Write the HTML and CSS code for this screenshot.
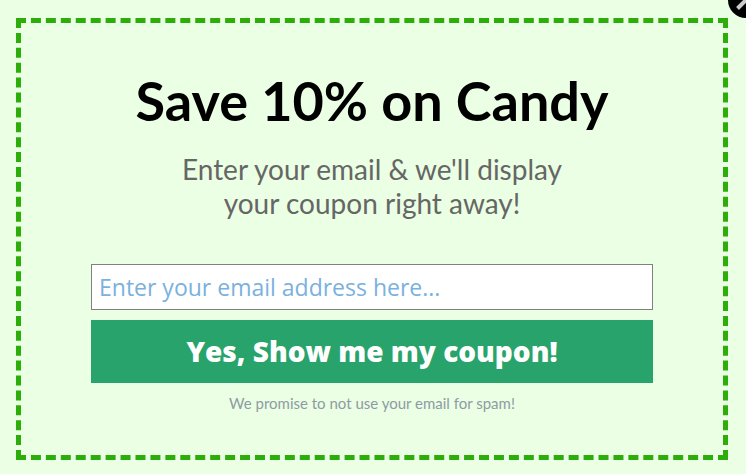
FILE: index.html
```html
<!DOCTYPE html>
<html lang="en">
<head>
    <meta charset="UTF-8">
    <meta name="viewport" content="width=device-width, initial-scale=1.0">
    <title>Save 10% on Candy</title>
    <link rel="stylesheet" href="styles.css">
</head>
<body>
    <div class="popup">
        <h1>Save 10% on Candy</h1>
        <p class="lead">Enter your email &amp; we'll display<br>your coupon right away!</p>
        <form class="form">
            <input class="email" type="email" placeholder="Enter your email address here..." aria-label="Email address">
            <button class="submit" type="submit">Yes, Show me my coupon!</button>
        </form>
        <p class="note">We promise to not use your email for spam!</p>
    </div>

    <button class="close" type="button" aria-label="Close">
        <svg viewBox="0 0 36 36" width="36" height="36">
            <circle cx="18" cy="18" r="18" fill="#000"/>
            <path d="M9.5 9.5L26.5 26.5M26.5 9.5L9.5 26.5" stroke="#ccc" stroke-width="4"/>
        </svg>
    </button>
</body>
</html>
```
FILE: styles.css
```css
* {
    box-sizing: border-box;
}

body {
    margin: 0;
    padding: 18px 18px 14px 16px;
    overflow: hidden;
    background-color: #eaffe3;
    font-family: Lato, sans-serif;
    text-align: center;
}

.popup {
    padding: 44px 70px 43px;
    border: 5px dashed #2dad09;
}

h1 {
    margin: 0;
    color: #000;
    font-size: 54px;
    font-weight: 700;
    line-height: 68px;
}

.lead {
    margin: 17px 0 44px;
    color: #666;
    font-size: 28px;
    line-height: 34px;
}

.form {
    display: flex;
    flex-direction: column;
    gap: 10px;
}

.email {
    height: 46px;
    padding: 0 7px;
    border: 1px solid #808080;
    background-color: #fff;
    font-family: "Open Sans", sans-serif;
    font-size: 23px;
}

.email::placeholder {
    color: #7ab1de;
}

.submit {
    height: 63px;
    padding: 0 0 2px;
    border: 0;
    background-color: #27a36b;
    color: #fff;
    font-family: "Open Sans", sans-serif;
    font-size: 28px;
    font-weight: 800;
}

.note {
    margin: 11px 0 0;
    color: #8f9ba3;
    font-size: 15px;
    line-height: 18px;
}

/* sits over the corner of the popup */
.close {
    position: absolute;
    top: -18px;
    right: -18px;
    padding: 0;
    border: 0;
    background: none;
    line-height: 0;
}
```
